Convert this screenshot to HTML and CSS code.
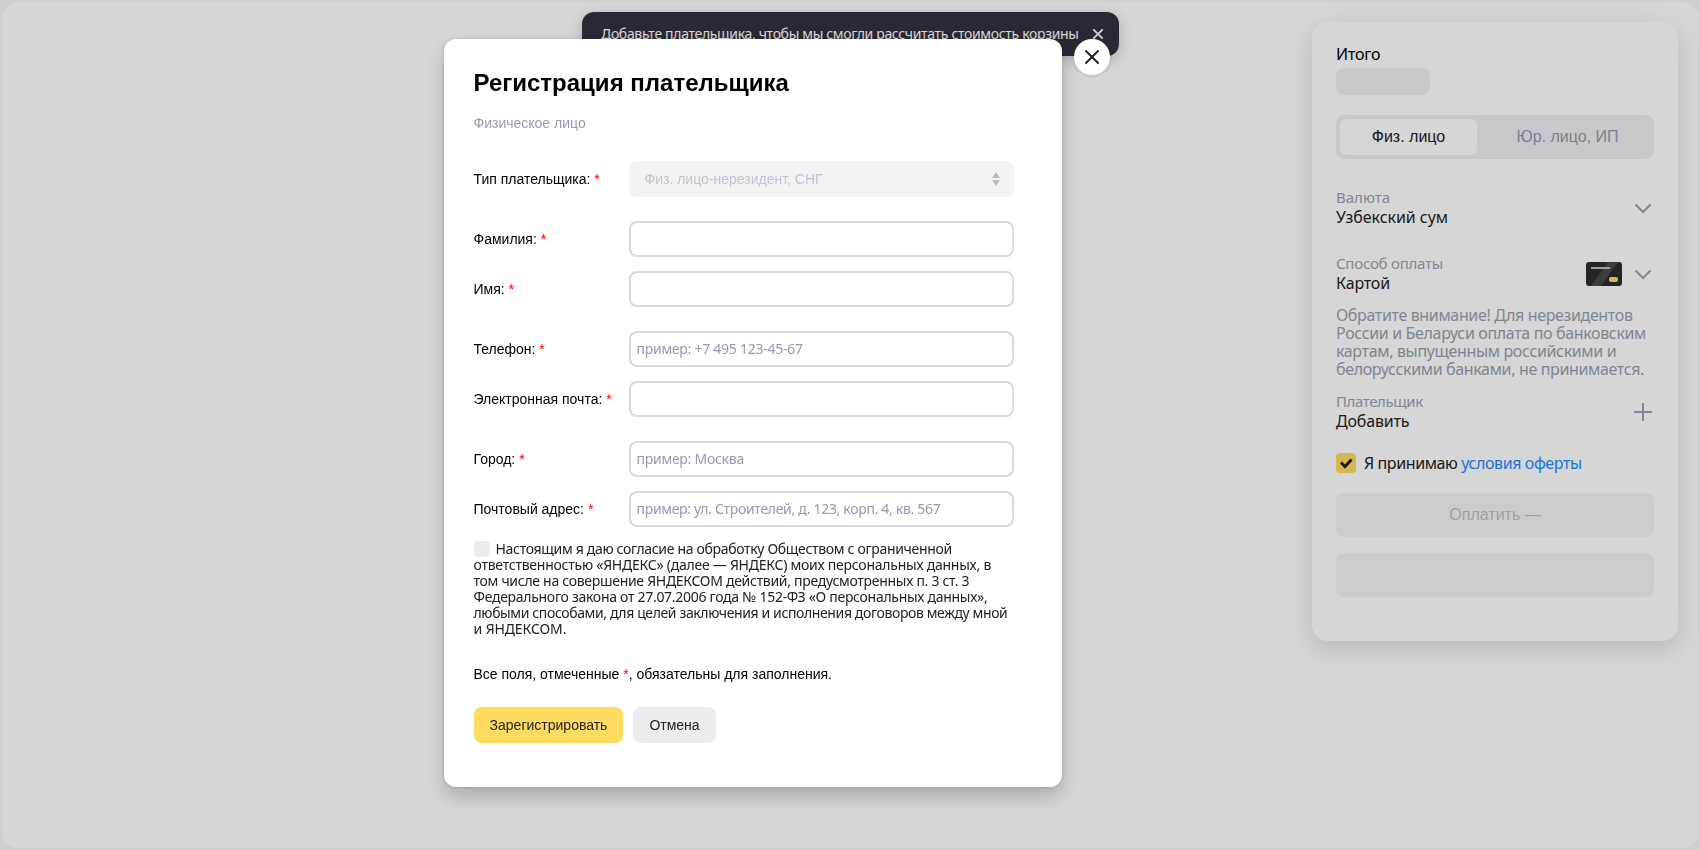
FILE: index.html
```html
<!DOCTYPE html>
<html lang="ru">
<head>
<meta charset="utf-8">
<title>Регистрация плательщика</title>
<link rel="stylesheet" href="styles.css">
</head>
<body>
<div class="page">
  <main class="sheet">
    <aside class="summary">
      <div class="summary-title">Итого</div>
      <div class="skeleton"></div>
      <div class="segment">
        <div class="segment-item active">Физ. лицо</div>
        <div class="segment-item company">Юр. лицо, ИП</div>
      </div>
      <div class="option currency">
        <div class="option-text"><span class="option-name">Валюта</span><span class="option-value sum">Узбекский сум</span></div>
        <svg class="chevron" viewBox="0 0 18 12"><path d="M1.500 1.500 9 9l7.500-7.500"/></svg>
      </div>
      <div class="option method">
        <div class="option-text"><span class="option-name way">Способ оплаты</span><span class="option-value">Картой</span></div>
        <svg class="card-icon" viewBox="0 0 36 24"><rect width="36" height="24" rx="3" fill="#2c2d2f"/><path d="M22 0h10L15 24H5z" fill="#47484c"/><path d="M5 6h19" stroke="#cfcfcf" stroke-width="1.8"/><rect x="23" y="15" width="9" height="5" rx="2" fill="#ffdb60"/></svg>
        <svg class="chevron" viewBox="0 0 18 12"><path d="M1.500 1.500 9 9l7.500-7.500"/></svg>
      </div>
      <p class="notice">Обратите внимание! Для нерезидентов<br>России и Беларуси оплата по банковским<br>картам, выпущенным российскими и<br>белорусскими банками, не принимается.</p>
      <div class="option payer">
        <div class="option-text"><span class="option-name who">Плательщик</span><span class="option-value">Добавить</span></div>
        <svg class="plus" viewBox="0 0 18 18"><path d="M9 0v18M0 9h18"/></svg>
      </div>
      <div class="accept">
        <span class="check"><svg viewBox="0 0 20 20"><path d="m5 9.500 4 4 6.500-7"/></svg></span>
        <span class="accept-text">Я принимаю <a class="link">условия оферты</a></span>
      </div>
      <div class="pay">Оплатить —</div>
      <div class="pay promo">Ввести промокод</div>
    </aside>
  </main>
</div>
<div class="toast">
  <span class="toast-text">Добавьте плательщика, чтобы мы смогли рассчитать стоимость корзины</span>
  <svg class="toast-close" viewBox="0 0 12 12"><path d="m1.300 1.300 9.400 9.400m0-9.400-9.400 9.400"/></svg>
</div>
<div class="overlay">
  <section class="modal">
    <h1 class="title">Регистрация плательщика</h1>
    <div class="subtitle">Физическое лицо</div>
    <form class="form">
      <div class="row wide"><label class="label">Тип плательщика: <b class="star">*</b></label>
        <div class="field select"><span>Физ. лицо-нерезидент, СНГ</span><svg class="arrows" viewBox="0 0 8 14"><path d="M4 0l4 6H0zM0 8h8l-4 6z"/></svg></div></div>
      <div class="row"><label class="label">Фамилия: <b class="star">*</b></label><div class="field"></div></div>
      <div class="row wide"><label class="label">Имя: <b class="star">*</b></label><div class="field"></div></div>
      <div class="row"><label class="label">Телефон: <b class="star">*</b></label><div class="field">пример: +7 495 123-45-67</div></div>
      <div class="row wide"><label class="label">Электронная почта: <b class="star">*</b></label><div class="field"></div></div>
      <div class="row"><label class="label">Город: <b class="star">*</b></label><div class="field">пример: Москва</div></div>
      <div class="row"><label class="label">Почтовый адрес: <b class="star">*</b></label><div class="field address">пример: ул. Строителей, д. 123, корп. 4, кв. 567</div></div>
      <div class="consent">
        <div class="line first"><span class="box"></span><span>Настоящим я даю согласие на обработку Обществом с ограниченной</span></div>
        <div class="line loose">ответственностью «ЯНДЕКС» (далее — ЯНДЕКС) моих персональных данных, в</div>
        <div class="line">том числе на совершение ЯНДЕКСОМ действий, предусмотренных п. 3 ст. 3</div>
        <div class="line">Федерального закона от 27.07.2006 года № 152-ФЗ «О персональных данных»,</div>
        <div class="line tight">любыми способами, для целей заключения и исполнения договоров между мной</div>
        <div class="line last">и ЯНДЕКСОМ.</div>
      </div>
      <div class="required">Все поля, отмеченные <b class="star">*</b>, обязательны для заполнения.</div>
      <div class="actions"><div class="button primary">Зарегистрировать</div><div class="button">Отмена</div></div>
    </form>
  </section>
  <div class="close"><svg viewBox="0 0 36 36"><path d="m12 12 12 12m0-12L12 24"/></svg></div>
</div>
</body>
</html>
```
FILE: styles.css
```css
* { box-sizing: border-box; }
body { margin: 0; height: 850px; overflow: hidden; font-family: "Noto Sans", sans-serif; color: #000; }
.page { height: 850px; padding: 2px; background: #f6f7f8; }
.sheet { height: 846px; border-radius: 16px; background: #fff; display: flex; justify-content: flex-end; align-items: flex-start; padding: 20px 20px 0 0; overflow: hidden; }
.summary { width: 366px; height: 619px; padding: 20px 24px; border-radius: 16px; background: #fff; box-shadow: 0 8px 24px rgba(120,130,155,.28); font-size: 16px; display: flex; flex-direction: column; }
.summary-title { height: 24px; line-height: 24px; letter-spacing: -.2px; }
.skeleton { width: 94px; height: 27px; margin: 2px 0 20px; border-radius: 8px; background: #f0f0f3; }
.segment { height: 44px; flex: none; padding: 4px; display: grid; grid-template-columns: 137px 1fr; border-radius: 8px; background: #eeeff3; }
.segment-item { line-height: 36px; text-align: center; color: #9298aa; border-radius: 6px; font-family: "Liberation Sans", sans-serif; }
.segment-item.active { background: #fff; color: #222; }
.segment-item.company { padding-left: 8px; }
.option { display: flex; align-items: center; height: 40px; flex: none; padding-right: 2px; }
.option-text { flex: 1; display: flex; flex-direction: column; padding-bottom: 2px; }
.option-name { font-size: 15px; line-height: 20px; color: #9aa1b2; }
.way { letter-spacing: -.23px; }
.who { letter-spacing: -.4px; }
.option-value { font-size: 16px; line-height: 20px; color: #222; letter-spacing: -.18px; }
.sum { letter-spacing: -.05px; }
.currency { margin-top: 29px; }
.method { margin-top: 26px; }
.chevron { width: 18px; height: 12px; margin-top: 2px; fill: none; stroke: #9aa1b2; stroke-width: 2; }
.card-icon { width: 36px; height: 24px; margin-right: 12px; }
.notice { margin: 12px 0 14px; font-size: 16px; line-height: 18px; color: #989eb0; letter-spacing: -.35px; white-space: nowrap; }
.plus { width: 18px; height: 18px; stroke: #9aa1b2; stroke-width: 2; }
.accept { display: flex; gap: 8px; height: 20px; margin-top: 21px; align-items: center; color: #222; letter-spacing: -.4px; }
.accept-text { line-height: 20px; padding-bottom: 1px; }
.check { width: 20px; height: 20px; border-radius: 4px; background: #ffdb60; }
.check svg { display: block; fill: none; stroke: #222; stroke-width: 3; }
.link { color: #258aff; }
.pay { height: 44px; flex: none; margin-top: 20px; border-radius: 8px; background: #f2f3f5; color: #b9bdca; line-height: 43px; text-align: center; font-family: "Liberation Sans", sans-serif; }
.promo { margin-top: 16px; color: #f5f6f7; }
.toast { position: absolute; left: 582px; top: 12px; width: 537px; height: 44px; padding: 0 15px 0 19px; display: flex; align-items: center; justify-content: space-between; border-radius: 12px; background: #32313d; color: #fff; font-size: 14px; box-shadow: 0 4px 14px rgba(0,0,0,.2); }
.toast-text { white-space: nowrap; letter-spacing: -.33px; padding-bottom: 2px; }
.toast-close { width: 12px; height: 12px; flex: none; stroke: #fff; stroke-width: 1.8; }
.overlay { position: fixed; inset: 0; padding: 39px 0 0 444px; display: flex; gap: 12px; background: rgba(0,0,0,.16); }
.modal { width: 618px; height: 748px; padding: 30px 30px 30px 29.5px; border-radius: 12px; background: #fff; box-shadow: 0 10px 20px rgba(0,0,0,.2), 0 0 4px rgba(0,0,0,.15); font-family: "Liberation Sans", sans-serif; font-size: 14px; }
.title { margin: 0; font-size: 24px; line-height: 28px; font-weight: 700; }
.subtitle { margin-top: 16px; line-height: 20px; color: #969db1; }
.form { margin-top: 28px; }
.row { display: grid; grid-template-columns: 155.5px 385px; height: 36px; margin-bottom: 14px; align-items: center; }
.row.wide { margin-bottom: 24px; }
.label { line-height: 20px; white-space: nowrap; }
.star { color: #f00; font-weight: 400; }
.field { height: 36px; border: 2px solid #d5d9e4; border-radius: 8px; padding: 0 5.5px; line-height: 32px; color: #939bb1; font-family: "Noto Sans", sans-serif; letter-spacing: -.26px; }
.address { letter-spacing: -.31px; }
.select { display: flex; align-items: center; justify-content: space-between; border: 0; padding: 0 14px 0 15.5px; background: #f2f3f5; color: #bfc3d3; font-family: "Liberation Sans", sans-serif; letter-spacing: 0; }
.arrows { width: 8px; height: 14px; fill: #b4bacb; }
.consent { height: 96px; font-family: "Noto Sans", sans-serif; line-height: 16px; color: #222; white-space: nowrap; letter-spacing: -.29px; }
.line { height: 16px; }
.first { display: flex; gap: 5.5px; letter-spacing: -.32px; }
.loose { letter-spacing: -.245px; }
.tight { letter-spacing: -.38px; }
.last { letter-spacing: -.1px; }
.box { width: 16px; height: 16px; margin-left: .5px; border-radius: 4px; background: #ecedf1; }
.required { margin-top: 27px; line-height: 20px; }
.actions { display: flex; gap: 10px; margin: 23px 0 0 .5px; }
.button { height: 36px; width: 83px; border-radius: 8px; background: #ecedf1; color: #222; line-height: 36px; text-align: center; }
.button.primary { width: 149px; background: #ffdb60; }
.close { width: 36px; height: 36px; border-radius: 50%; background: #fff; box-shadow: 0 1px 4px rgba(0,0,0,.15); }
.close svg { display: block; stroke: #222; stroke-width: 2; stroke-linecap: round; }
```
